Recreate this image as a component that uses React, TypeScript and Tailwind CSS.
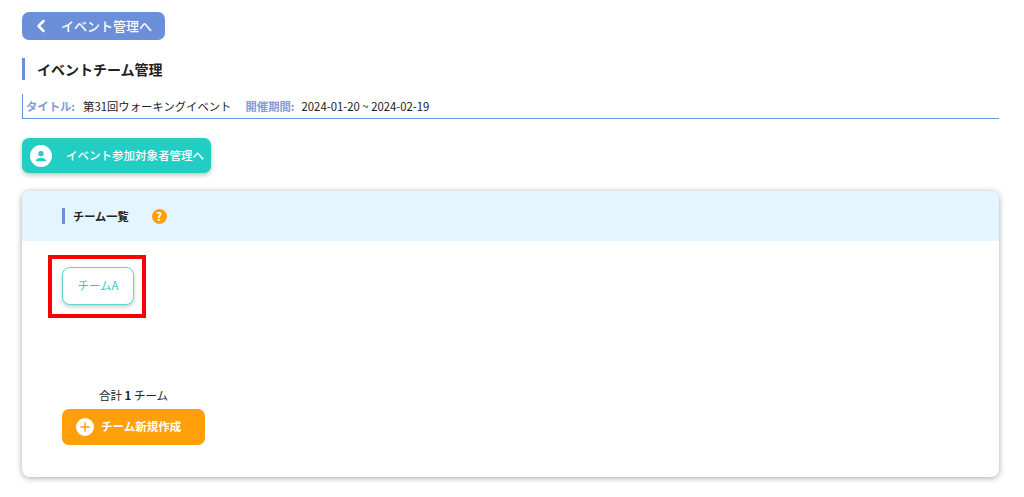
import { ChevronLeft, Plus } from "lucide-react"

const font = "font-['Noto_Sans_CJK_JP','Noto_Sans',sans-serif]"

export default function App() {
  return (
    <div className={`${font} w-[1024px] h-[497px] overflow-hidden bg-white pl-[22px] pr-[25px] pt-[12px] text-[#212121]`}>
      <button className="flex h-[28px] w-[143px] items-center rounded-[7px] bg-[#6b8fd8] pl-[9px] text-[13px] font-medium text-white">
        <ChevronLeft className="h-[20px] w-[20px]" strokeWidth={3} />
        <span className="ml-[10px]">イベント管理へ</span>
      </button>

      <h1 className="mt-[18px] flex h-[22px] items-center border-l-[3px] border-[#6b8fd8] pl-[12px] text-[14px] font-bold leading-none">
        イベントチーム管理
      </h1>

      <div className="mt-[14px] flex h-[25px] items-center border-b border-l border-[#6b8fd8] pl-[3px] pt-[1px] text-[11.35px]">
        <span className="font-bold text-[#7f9bdc]">タイトル:</span>
        <span className="ml-[8px]">第31回ウォーキングイベント</span>
        <span className="ml-[14px] font-bold text-[#7f9bdc]">開催期間:</span>
        <span className="ml-[7px]">2024-01-20 ~ 2024-02-19</span>
      </div>

      <button className="mt-[19px] flex h-[35px] w-[189px] items-center rounded-[7px] bg-[#22cdc3] pl-[8px] text-[11.5px] font-medium text-white shadow-[0_2px_5px_rgba(0,0,0,0.25)]">
        <span className="flex h-[22px] w-[22px] items-center justify-center rounded-full bg-white">
          <svg viewBox="0 0 24 24" className="h-[16px] w-[16px] fill-[#22cdc3]">
            <circle cx="12" cy="8.5" r="4" />
            <path d="M4.5 19c0-3 5-4.5 7.5-4.5s7.5 1.5 7.5 4.5v1h-15z" />
          </svg>
        </span>
        <span className="ml-[14px]">イベント参加対象者管理へ</span>
      </button>

      <section className="mt-[18px] h-[286px] w-[977px] overflow-hidden rounded-[8px] bg-white shadow-[0_1px_6px_rgba(0,0,0,0.35)]">
        <div className="flex h-[50px] items-center bg-[#e3f5fe] pl-[40px]">
          <h2 className="flex h-[16px] items-center border-l-[3px] border-[#6b8fd8] pl-[8px] pt-[1px] text-[11.2px] font-bold leading-none">
            チーム一覧
          </h2>
          <span className="ml-[23px] flex h-[15px] w-[15px] items-center justify-center rounded-full bg-[#ff9f0a] text-[11px] font-bold leading-none text-white">
            ?
          </span>
        </div>

        <div className="relative pl-[40px] pt-[26px]">
          <button className="flex h-[38px] w-[72px] items-center justify-center rounded-[8px] border border-[#5fd6cf] bg-white text-[11.5px] text-[#35cbc2] shadow-[0_2px_4px_rgba(0,0,0,0.2)]">
            チームA
          </button>
          <div className="absolute left-[26px] top-[14px] h-[63px] w-[98px] border-[4px] border-[#ff0000]" />

          <p className="mt-[82px] w-[143px] text-center text-[11.5px] leading-[16px]">
            合計 <b>1</b> チーム
          </p>
          <button className="mt-[6px] flex h-[36px] w-[143px] items-center rounded-[7px] bg-[#ff9f0a] pl-[14px] text-[11.5px] font-bold text-white">
            <span className="flex h-[18px] w-[18px] items-center justify-center rounded-full bg-white">
              <Plus className="h-[14px] w-[14px] text-[#ff9f0a]" strokeWidth={2.5} />
            </span>
            <span className="ml-[7px]">チーム新規作成</span>
          </button>
        </div>
      </section>
    </div>
  )
}
